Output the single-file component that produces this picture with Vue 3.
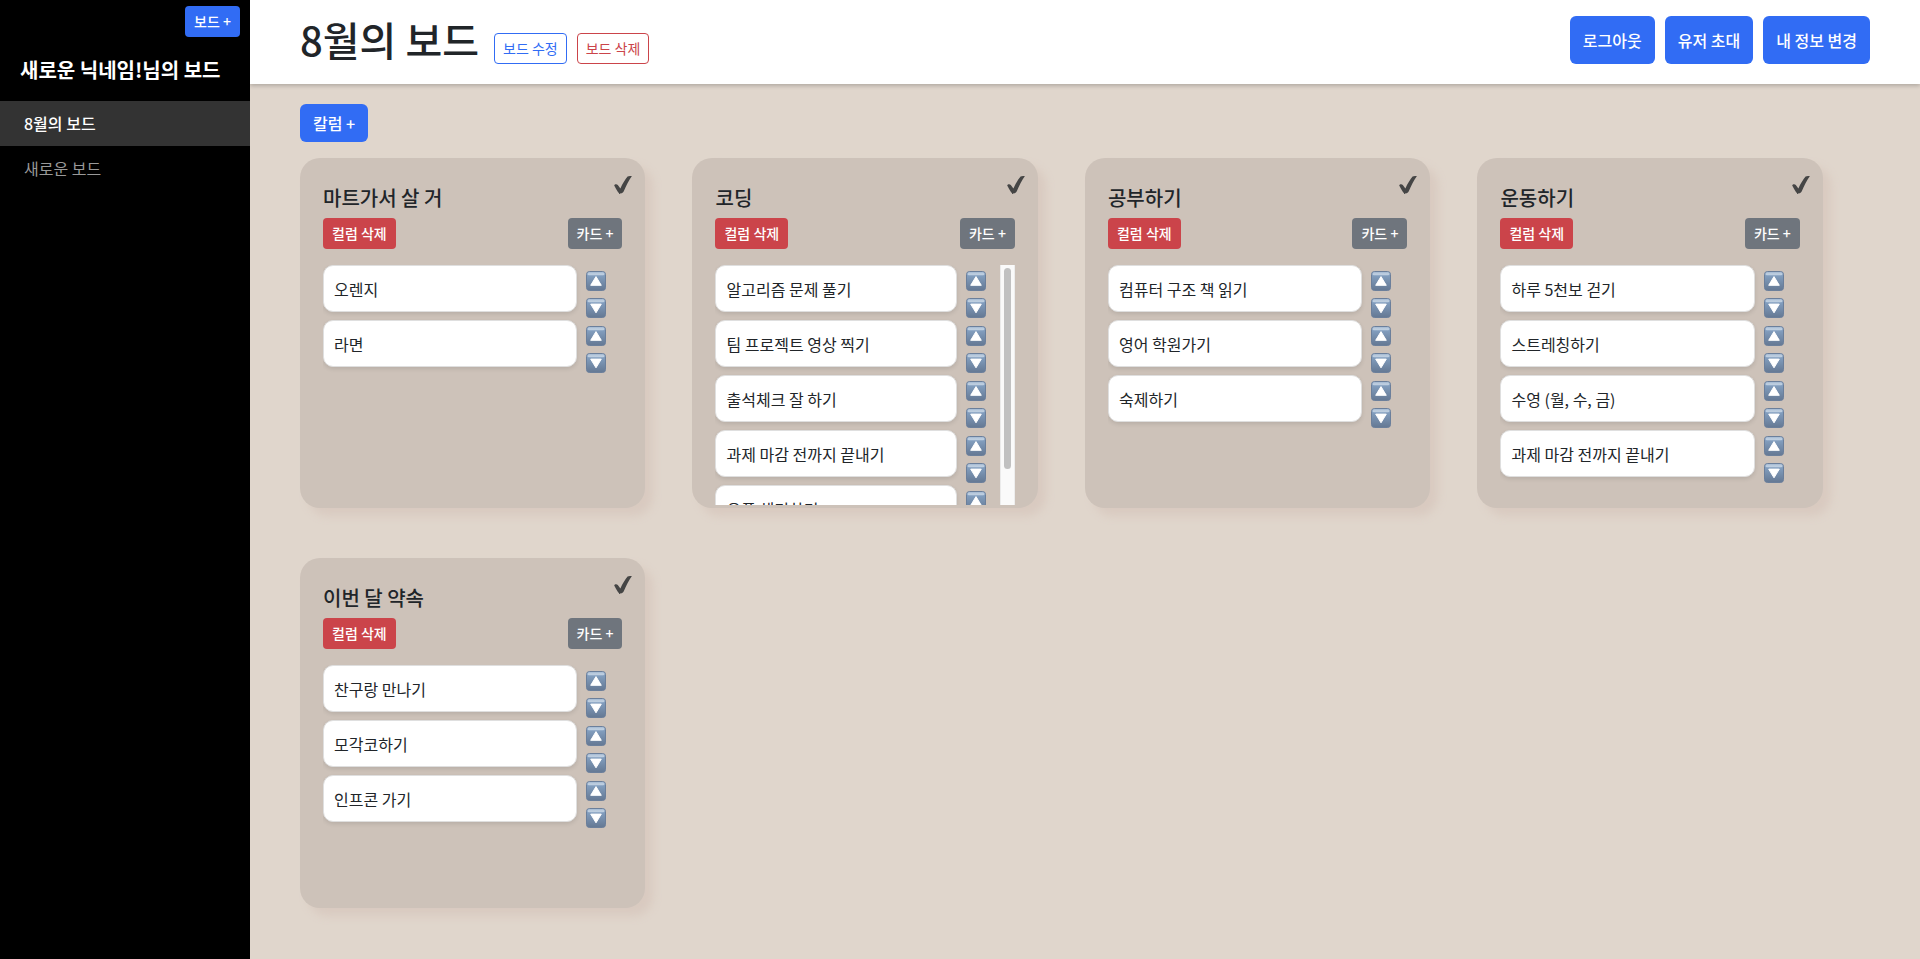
<script setup>
const boards = [
  { name: '8월의 보드', active: true },
  { name: '새로운 보드', active: false },
]

const columns = [
  { title: '마트가서 살 거', cards: ['오렌지', '라면'] },
  {
    title: '코딩',
    cards: ['알고리즘 문제 풀기', '팀 프로젝트 영상 찍기', '출석체크 잘 하기', '과제 마감 전까지 끝내기', '오픈 채팅하기'],
  },
  { title: '공부하기', cards: ['컴퓨터 구조 책 읽기', '영어 학원가기', '숙제하기'] },
  { title: '운동하기', cards: ['하루 5천보 걷기', '스트레칭하기', '수영 (월, 수, 금)', '과제 마감 전까지 끝내기'] },
  { title: '이번 달 약속', cards: ['찬구랑 만나기', '모각코하기', '인프콘 가기'] },
]

const visibleCards = 4
</script>

<template>
  <div class="app">
    <svg class="defs" width="0" height="0" aria-hidden="true">
      <defs>
        <linearGradient id="key-face" x1="0" y1="0" x2="0" y2="1">
          <stop offset="0" stop-color="#8aa8ca" />
          <stop offset="1" stop-color="#647893" />
        </linearGradient>
        <linearGradient id="key-shine" x1="0" y1="0" x2="0" y2="1">
          <stop offset="0" stop-color="#b4c6da" />
          <stop offset="1" stop-color="#c0d0e1" />
        </linearGradient>
      </defs>
    </svg>

    <aside class="sidebar">
      <div class="sidebar-top">
        <button type="button" class="btn small primary">보드 +</button>
      </div>
      <h2 class="owner">새로운 닉네임!님의 보드</h2>
      <nav class="menu">
        <a v-for="b in boards" :key="b.name" href="#" class="menu-item" :class="{ active: b.active }">{{ b.name }}</a>
      </nav>
    </aside>

    <main class="main">
      <header class="header">
        <h1 class="title">8월의 보드</h1>
        <div class="board-actions">
          <button type="button" class="btn small outline-primary">보드 수정</button>
          <button type="button" class="btn small outline-danger">보드 삭제</button>
        </div>
        <div class="user-actions">
          <button type="button" class="btn primary tall">로그아웃</button>
          <button type="button" class="btn primary tall">유저 초대</button>
          <button type="button" class="btn primary tall">내 정보 변경</button>
        </div>
      </header>

      <div class="content">
        <button type="button" class="btn primary">칼럼 +</button>
        <div class="columns">
          <section v-for="col in columns" :key="col.title" class="column">
            <button type="button" class="check" aria-label="완료">
              <svg width="20" height="20" viewBox="0 0 20 20">
                <path
                  d="M1.2 10.6C1.6 9 3.8 8.8 4.8 10L7.4 13.4C9.4 9.2 12 4.6 14.6 1.6C15.6 .7 17.6.8 18.9 1.1C15.8 5.6 13 11.2 10.9 16C9.8 18.9 6.6 19 5.1 17.2C3.8 15.4 2.4 13.2 1.2 10.6Z"
                  fill="#454545"
                />
              </svg>
            </button>
            <h3 class="column-title">{{ col.title }}</h3>
            <div class="column-actions">
              <button type="button" class="btn small danger">컬럼 삭제</button>
              <button type="button" class="btn small secondary">카드 +</button>
            </div>
            <div class="list-area">
              <ul class="list">
                <li v-for="card in col.cards" :key="card" class="row">
                  <div class="card">{{ card }}</div>
                  <div class="arrows">
                    <button type="button" class="arrow" aria-label="위로">
                      <svg width="20" height="20" viewBox="0 0 20 20">
                        <rect x=".5" y=".5" width="19" height="19" rx="3" fill="url(#key-face)" stroke="#6b7f9b" />
                        <rect x="1.5" y="1.2" width="17" height="3" rx="1.5" fill="url(#key-shine)" />
                        <path d="M10 5.6L15.3 14.3H4.7Z" fill="#fff" stroke="#fff" stroke-width="1" stroke-linejoin="round" />
                      </svg>
                    </button>
                    <button type="button" class="arrow" aria-label="아래로">
                      <svg width="20" height="20" viewBox="0 0 20 20">
                        <rect x=".5" y=".5" width="19" height="19" rx="3" fill="url(#key-face)" stroke="#6b7f9b" />
                        <rect x="1.5" y="1.2" width="17" height="3" rx="1.5" fill="url(#key-shine)" />
                        <path d="M10 14.8L15.3 6.1H4.7Z" fill="#fff" stroke="#fff" stroke-width="1" stroke-linejoin="round" />
                      </svg>
                    </button>
                  </div>
                </li>
              </ul>
              <div v-if="col.cards.length > visibleCards" class="track" aria-hidden="true">
                <div class="thumb"></div>
              </div>
            </div>
          </section>
        </div>
      </div>
    </main>
  </div>
</template>

<style>
body {
  margin: 0;
  background: #e0d6cc;
}
</style>

<style scoped>
* {
  box-sizing: border-box;
}
.app {
  display: flex;
  min-height: 100vh;
  font-family: 'Noto Sans CJK KR', 'Noto Sans', sans-serif;
  font-size: 16px;
  line-height: 24px;
  color: #212529;
  background: #e0d6cc;
}
.defs {
  position: absolute;
}
h1,
h2,
h3,
ul {
  margin: 0;
  padding: 0;
}
button {
  font-family: inherit;
  cursor: pointer;
}
.btn {
  padding: 6px 12px;
  border: 1px solid transparent;
  border-radius: 6px;
  font-size: 16px;
  font-weight: 500;
  line-height: 24px;
  color: #fff;
  white-space: nowrap;
}
.small {
  padding: 4px 8px;
  border-radius: 4px;
  font-size: 14px;
  line-height: 21px;
}
.tall {
  padding: 11px 12px;
}
.primary {
  background: #316cf4;
}
.danger {
  background: #cb444a;
}
.secondary {
  background: #6f757d;
}
.outline-primary {
  background: #fff;
  border-color: #316cf4;
  color: #316cf4;
  font-weight: 400;
}
.outline-danger {
  background: #fff;
  border-color: #cb444a;
  color: #cb444a;
  font-weight: 400;
}

.sidebar {
  flex: 0 0 250px;
  background: #000;
}
.sidebar-top {
  display: flex;
  justify-content: flex-end;
  padding: 6px 10px 0 0;
}
.owner {
  padding: 18px 20px 16px;
  font-size: 20px;
  font-weight: 700;
  line-height: 30px;
  color: #fff;
}
.menu {
  display: flex;
  flex-direction: column;
}
.menu-item {
  padding: 10px 24px 11px;
  color: #999;
  text-decoration: none;
}
.menu-item.active {
  background: #333;
  color: #fff;
  font-weight: 500;
}

.main {
  flex: 1;
  min-width: 0;
}
.header {
  display: flex;
  align-items: flex-end;
  padding: 16px 50px 20px;
  background: #fff;
  box-shadow: 0 2px 4px rgba(0, 0, 0, 0.2);
}
.title {
  padding-bottom: 2px;
  font-size: 40px;
  font-weight: 500;
  line-height: 46px;
}
.board-actions {
  display: flex;
  gap: 10px;
  margin-left: 15px;
}
.user-actions {
  display: flex;
  gap: 10px;
  margin-left: auto;
}
.content {
  padding: 20px 50px 50px;
}
.columns {
  display: grid;
  grid-template-columns: repeat(4, 22%);
  column-gap: 3%;
  row-gap: 50px;
  margin-top: 16px;
}
.column {
  position: relative;
  padding: 28px 23px 3px;
  border-radius: 20px;
  background: #cdc2b9;
  box-shadow: 8px 8px 10px #d9cac0;
}
.check {
  position: absolute;
  top: 17px;
  right: 12px;
  width: 20px;
  height: 20px;
  padding: 0;
  border: 0;
  background: none;
}
.check svg,
.arrow svg {
  display: block;
}
.column-title {
  font-size: 20px;
  font-weight: 500;
  line-height: 24px;
}
.column-actions {
  display: flex;
  justify-content: space-between;
  margin-top: 8px;
}
.list-area {
  display: flex;
  height: 240px;
  margin-top: 16px;
}
.list {
  flex: 1;
  min-width: 0;
  overflow-y: auto;
  list-style: none;
  scrollbar-width: none;
}
.track {
  flex: 0 0 15px;
  padding: 3px;
  border-left: 1px solid #ebebeb;
  border-right: 1px solid #ededed;
  background: #fafafa;
}
.thumb {
  height: 86%;
  border-radius: 4px;
  background: #c1c1c1;
}
.row {
  display: flex;
  align-items: flex-start;
}
.card {
  width: 85%;
  margin-bottom: 8px;
  padding: 11px 10px 10px;
  border: 1px solid #dfdfdf;
  border-radius: 10px;
  background: #fff;
  box-shadow: 0 2px 4px rgba(0, 0, 0, 0.1);
}
.arrows {
  display: flex;
  flex-direction: column;
  gap: 7px;
  padding: 6px 0 0 9px;
}
.arrow {
  width: 20px;
  height: 20px;
  padding: 0;
  border: 0;
  background: none;
}
</style>
